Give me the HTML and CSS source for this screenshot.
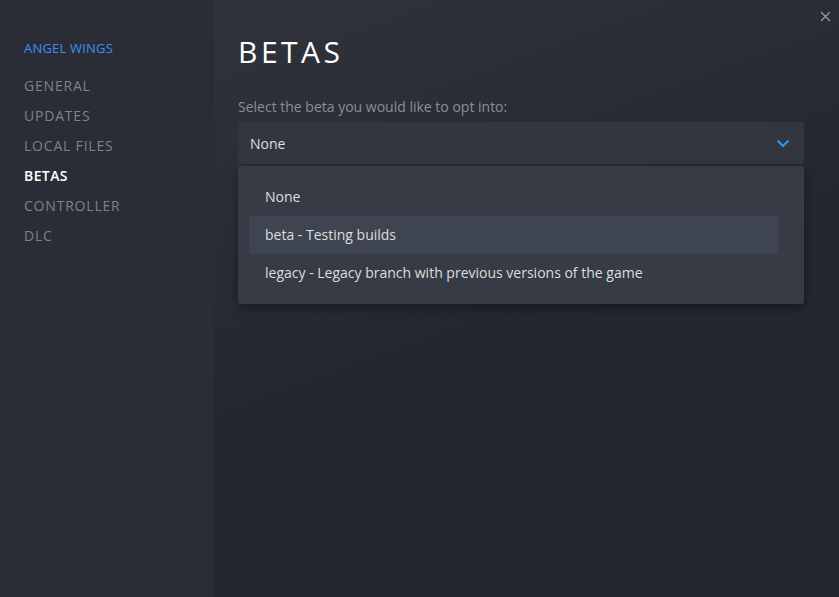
FILE: index.html
```html
<!DOCTYPE html>
<html>
<head>
	<meta charset="utf-8">
	<title>Properties - Angel Wings</title>
	<link rel="stylesheet" href="styles.css">
</head>
<body>
<div class="window">
	<div class="sidebar">
		<div class="game-name">ANGEL WINGS</div>
		<div class="nav">
			<div class="nav-item">GENERAL</div>
			<div class="nav-item">UPDATES</div>
			<div class="nav-item">LOCAL FILES</div>
			<div class="nav-item active">BETAS</div>
			<div class="nav-item">CONTROLLER</div>
			<div class="nav-item">DLC</div>
		</div>
	</div>
	<div class="content">
		<div class="close">
			<svg width="11" height="11" viewBox="0 0 11 11"><path d="M1 1L10 10M10 1L1 10" stroke="#8c9aa0" stroke-width="1.4"/></svg>
		</div>
		<h1 class="title">BETAS</h1>
		<div class="label">Select the beta you would like to opt into:</div>
		<div class="dropdown">
			<div class="select">
				<span>None</span>
				<svg width="14" height="9" viewBox="0 0 14 9"><path d="M1.5 1.5L7 7L12.5 1.5" fill="none" stroke="#1a9fff" stroke-width="2"/></svg>
			</div>
			<div class="menu">
				<div class="option">None</div>
				<div class="option hover">beta - Testing builds</div>
				<div class="option">legacy - Legacy branch with previous versions of the game</div>
			</div>
		</div>
	</div>
</div>
</body>
</html>
```

FILE: styles.css
```css
body{
	margin: 0;
	font-family: "Open Sans", "Noto Sans", sans-serif;
	background: #23262e;
}
.window{
	display: flex;
	width: 839px;
	height: 597px;
	overflow: hidden;
}
.sidebar{
	width: 214px;
	flex-shrink: 0;
	background: #2a2d36;
	padding: 39px 0 0 24px;
	box-sizing: border-box;
}
.game-name{
	color: #3d8df5;
	font-size: 13px;
	line-height: 18px;
	letter-spacing: 0.2px;
	margin-bottom: 14px;
}
.nav-item{
	color: #7f8287;
	font-size: 14px;
	line-height: 30px;
	letter-spacing: 0.8px;
}
.nav-item.active{
	color: #ffffff;
	font-weight: 600;
	letter-spacing: 0.4px;
}
.content{
	flex: 1;
	position: relative;
	padding: 0 35px 0 24px;
	background: linear-gradient(160deg, #30333c 0%, #292c34 30%, #23262e 55%);
}
.close{
	position: absolute;
	top: 5px;
	right: 8px;
}
.title{
	margin: 32px 0 0;
	color: #ffffff;
	font-size: 30px;
	font-weight: 400;
	letter-spacing: 3.5px;
	line-height: 40px;
}
.label{
	margin-top: 25px;
	color: #8b8e94;
	font-size: 14px;
	line-height: 20px;
}
.dropdown{
	margin-top: 5px;
}
.select{
	display: flex;
	justify-content: space-between;
	align-items: center;
	height: 42px;
	padding: 0 14px 0 12px;
	background: #33363f;
	border-radius: 3px;
	color: #dcdedf;
	font-size: 14px;
}
.menu{
	margin-top: 2px;
	padding: 12px 26px 12px 11px;
	background: #373b45;
	border-radius: 3px;
	box-shadow: 0 4px 10px rgba(0,0,0,0.35);
}
.option{
	height: 38px;
	line-height: 38px;
	padding-left: 16px;
	color: #dcdedf;
	font-size: 14px;
}
.option.hover{
	background: #3e4450;
}
```
